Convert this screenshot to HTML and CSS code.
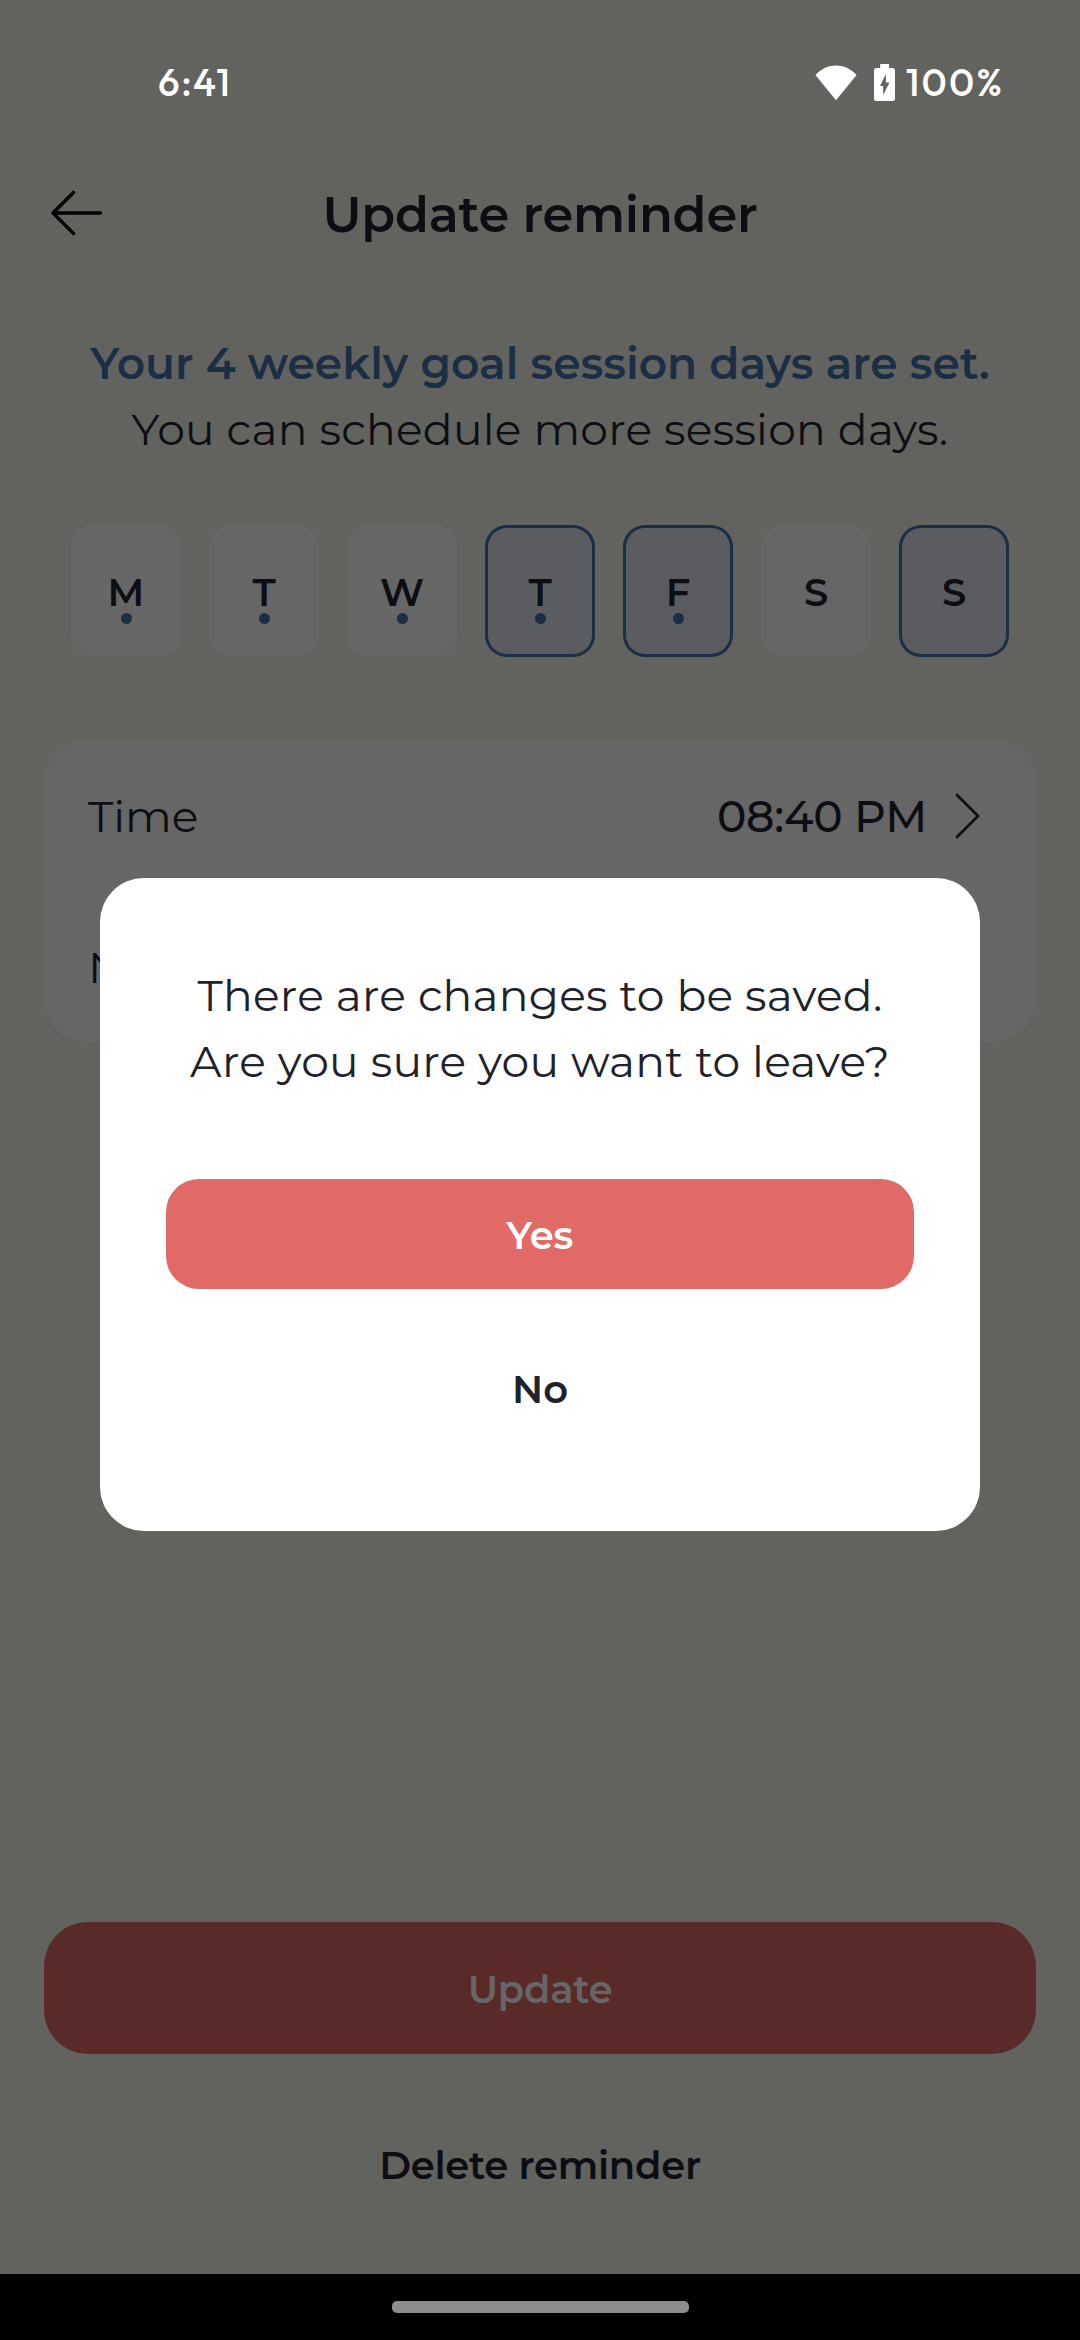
FILE: index.html
```html
<!DOCTYPE html>
<html lang="en">
<head>
<meta charset="utf-8">
<title>Update reminder</title>
<link rel="stylesheet" href="styles.css">
</head>
<body>
<div class="screen">
  <div class="status">
    <span class="clock">6:41</span>
    <div class="indicators">
      <svg class="wifi" width="42" height="36" viewBox="0 0 42 36"><path d="M21 35.3 .4 10C6.500 3.500 13.500.5 21 .5S35.500 3.500 41.600 10Z" fill="#fff"/></svg>
      <svg class="battery" width="21" height="37" viewBox="0 0 21 37"><path fill="#fff" fill-rule="evenodd" d="M6.200 0H15V4H18.500Q21 4 21 6.500V34.500Q21 37 18.500 37H2.500Q0 37 0 34.500V6.500Q0 4 2.500 4H6.200ZM11.900 10 6 22H9.200V31L15.500 18.500H11.900Z"/></svg>
      <span class="level">100%</span>
    </div>
  </div>
  <header class="header">
    <svg class="back" width="52" height="46" viewBox="0 0 52 46" fill="none" stroke="#000" stroke-width="3.400" stroke-linecap="round" stroke-linejoin="round"><path d="M2 23H49.500M22.500 2.500 2 23 22.500 43.500"/></svg>
    <h1 class="title">Update reminder</h1>
  </header>
  <div class="message">
    <p class="goal">Your 4 weekly goal session days are set.</p>
    <p class="hint">You can schedule more session days.</p>
  </div>
  <div class="days">
    <div class="day dotted">M</div>
    <div class="day dotted">T</div>
    <div class="day dotted">W</div>
    <div class="day dotted selected">T</div>
    <div class="day dotted selected">F</div>
    <div class="day">S</div>
    <div class="day selected">S</div>
  </div>
  <div class="card">
    <div class="row">
      <span class="label">Time</span>
      <span class="value">08:40 PM</span>
      <svg width="25" height="46" viewBox="0 0 25 46" fill="none" stroke="#0d0e13" stroke-width="2.800" stroke-linecap="round" stroke-linejoin="round"><path d="M2 2 23 23 2 44"/></svg>
    </div>
    <div class="row"><span class="label">N</span></div>
  </div>
  <div class="actions">
    <div class="button update">Update</div>
    <div class="button delete">Delete reminder</div>
  </div>
  <div class="navbar"><div class="handle"></div></div>
  <div class="dialog">
    <p>There are changes to be saved.</p>
    <p>Are you sure you want to leave?</p>
    <div class="choice yes">Yes</div>
    <div class="choice no">No</div>
  </div>
</div>
</body>
</html>
```
FILE: styles.css
```css
* { box-sizing: border-box; }
body { margin: 0; background: #62625f; }
p, h1 { margin: 0; }
.screen {
  position: relative;
  display: flex;
  flex-direction: column;
  width: 1080px;
  height: 2340px;
  overflow: hidden;
  background: #62625f;
  color: #0d0e13;
  font-family: Montserrat, Inter, sans-serif;
  font-size: 44px;
  font-weight: 380;
  white-space: nowrap;
}
.status {
  display: flex;
  justify-content: space-between;
  align-items: center;
  height: 132px;
  padding: 33px 76px 0 158px;
  color: #fff;
  font-family: Outfit, Figtree, Montserrat, Inter, sans-serif;
  font-size: 38.500px;
  font-weight: 500;
}
.indicators { display: flex; align-items: center; }
.battery { margin: 0 11px 0 17px; }
.clock { padding-bottom: 2px; letter-spacing: 1.500px; }
.level { padding-bottom: 2px; letter-spacing: 2.200px; }
.header {
  display: grid;
  grid-template-columns: 52px 1fr 52px;
  align-items: center;
  height: 162px;
  padding: 0 51px;
}
.title {
  padding-top: 2px;
  text-align: center;
  font-size: 49.500px;
  font-weight: 600;
  letter-spacing: -.25px;
}
.message { margin-top: 36px; line-height: 66px; text-align: center; }
.goal { color: #1a2f45; font-weight: 600; }
.hint { letter-spacing: .25px; }
.days { display: flex; justify-content: center; gap: 28px; margin-top: 63px; }
.day {
  position: relative;
  display: flex;
  justify-content: center;
  align-items: center;
  width: 110px;
  height: 132px;
  padding-top: 3px;
  border-radius: 22px;
  background: #666;
  font-size: 38.500px;
  font-weight: 600;
}
.day.selected { background: #5b5c5f; box-shadow: inset 0 0 0 3px #1a2f45; }
.day.dotted::after {
  content: "";
  position: absolute;
  top: 88px;
  left: 50px;
  width: 11px;
  height: 11px;
  border-radius: 50%;
  background: #1a2f45;
}
.card {
  margin: 83px 44px 0;
  padding: 0 56px 0 44px;
  border-radius: 44px;
  background: #666;
}
.row { display: flex; align-items: center; height: 151px; }
.label { flex: 1; }
.value { margin-right: 28px; font-weight: 500; letter-spacing: -.2px; }
.actions { display: flex; flex-direction: column; gap: 44px; margin-top: auto; padding: 0 44px 44px; }
.button, .choice {
  display: flex;
  justify-content: center;
  align-items: center;
  padding-top: 3px;
  font-size: 38.500px;
  font-weight: 600;
}
.button { height: 132px; border-radius: 44px; letter-spacing: -.25px; }
.update { background: #5a2a29; color: #666; }
.navbar { display: flex; justify-content: center; align-items: center; height: 66px; background: #000; }
.handle { width: 297px; height: 12px; border-radius: 5px; background: #8c8c8c; }
.dialog {
  position: absolute;
  top: 878px;
  left: 100px;
  width: 880px;
  height: 653px;
  padding: 84px 66px 0;
  border-radius: 44px;
  background: #fff;
  color: #1f212b;
  letter-spacing: .25px;
  line-height: 66px;
  text-align: center;
}
.choice { height: 110px; border-radius: 33px; letter-spacing: 0; }
.yes { margin-top: 85px; background: #e26a66; color: #fff; }
.no { margin-top: 44px; }
```
